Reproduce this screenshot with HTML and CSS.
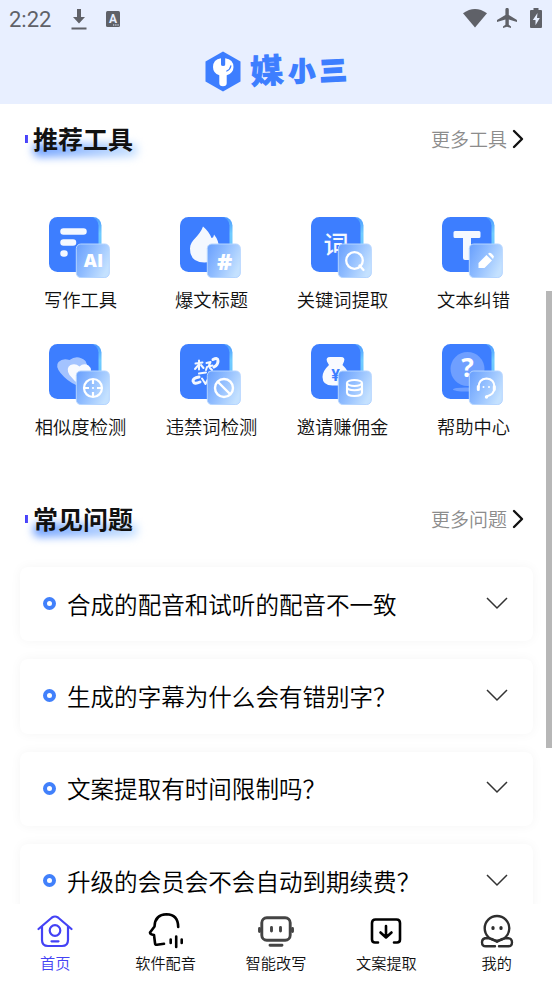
FILE: index.html
```html
<!DOCTYPE html>
<html lang="zh-CN">
<head>
<meta charset="utf-8">
<title>媒小三</title>
<link rel="stylesheet" href="styles.css">
</head>
<body>
<svg class="defs" width="0" height="0" aria-hidden="true">
  <defs>
    <linearGradient id="strip" x1="0" y1="0" x2="0" y2="1">
      <stop offset="0" stop-color="#4a98ff"/><stop offset=".3" stop-color="#70ccff"/><stop offset="1" stop-color="#62b8ff"/>
    </linearGradient>
    <linearGradient id="glass" x1="0" y1="0.1" x2="1" y2=".6">
      <stop offset="0" stop-color="#6ba1fd"/><stop offset=".45" stop-color="#8fbcff"/><stop offset="1" stop-color="#c4e1ff"/>
    </linearGradient>
    <g id="tile">
      <rect x="8" y="0" width="44.500" height="55" rx="8.500" fill="url(#strip)"/>
      <rect x="0" y="0" width="49.500" height="55" rx="8.500" fill="#3d7eff"/>
    </g>
    <g id="badge">
      <rect x="27.300" y="27" width="33" height="33.500" rx="4.500" fill="url(#glass)" stroke="#b5d5ff" stroke-width="1"/>
    </g>
  </defs>
</svg>
<div class="app">
  <header class="header">
    <div class="status">
      <span class="clock">2:22</span>
      <svg class="st-down" width="16" height="21" viewBox="0 0 16 21"><path d="M6 0h4v8h4l-6 6.500L2 8h4zM.5 18.500h15v2H.5z"/></svg>
      <svg class="st-a" width="14" height="16" viewBox="0 0 14 16"><rect width="14" height="16" rx="1.500"/><text x="7" y="11.500">A</text><path d="M7 13.500h1.300v1H7zm2.200 0h1.300v1H9.200zm2.200 0h1.300v1h-1.300z" fill="#e8efff"/></svg>
      <svg class="st-wifi" width="24" height="19" viewBox="0 0 24 19"><path d="M0 4.300Q12-4.300 24 4.300L12 18.500z"/></svg>
      <svg class="st-plane" width="20" height="21" viewBox="0 0 20 21"><path d="M20 14v-2l-8.200-5V1.600a1.700 1.700 0 0 0-3.400 0V7L0 12v2l8.400-2.600v5.300L6 18.500V20l4-1.200 4 1.200v-1.500l-2.200-1.800v-5.300z"/></svg>
      <svg class="st-batt" width="12" height="20" viewBox="0 0 12 20"><path d="M3.500 0h5v2H11q1 0 1 1v16q0 1-1 1H1q-1 0-1-1V3q0-1 1-1h2.500z"/><path d="M7.500 5L2.800 12h2.700v5.300L9.800 10H7z" fill="#e8efff"/></svg>
    </div>
    <div class="brand">
      <svg width="36" height="41" viewBox="0 0 36 41">
        <path d="M18 .5L35.500 10.500v20L18 40.500.5 30.500v-20z" fill="#3d7eff"/>
        <path d="M16 7.200Q8 8.500 8 16q0 6 6.300 8.300V32q0 3.300 3.700 3.300t3.700-3.300v-7.700Q28.500 22 28.500 16q0-7.500-8.300-8.800v6.300q0 1.500-2.100 1.500T16 13.500z" fill="#fff"/>
        <path d="M25.800 15q-.5 3.500-4 5" fill="none" stroke="#3d7eff" stroke-width="1.300" stroke-linecap="round"/>
      </svg>
      <h1 class="wordmark"><span class="w1">媒</span><span class="w2">小</span><span class="w3">三</span></h1>
    </div>
  </header>

  <main class="content">
    <div class="section-head">
      <h2>推荐工具</h2>
      <a class="more"><span>更多工具</span><svg width="12" height="20" viewBox="0 0 12 20"><path d="M2 2l8 8-8 8"/></svg></a>
    </div>
    <div class="tools">
      <div class="tool">
        <svg class="ticon" viewBox="0 0 62 62"><use href="#tile"/>
          <path d="M14.500 14.500h20M14.500 25.500h9.500M14.500 36.500h1" stroke="#f4f8ff" stroke-width="6.500" stroke-linecap="round"/>
          <use href="#badge"/><text class="g-ai" x="44.500" y="50">AI</text></svg>
        <span>写作工具</span>
      </div>
      <div class="tool">
        <svg class="ticon" viewBox="0 0 62 62"><use href="#tile"/>
          <path d="M23 9.500q6 5 8.500 11.500 2 0 2.500-3.500 5 6 5 14 0 14-14.500 14T10 31.500C10 23 20 19 23 9.500z" fill="#f4f8ff"/>
          <use href="#badge"/><text class="g-hash" x="44.500" y="52.500">#</text></svg>
        <span>爆文标题</span>
      </div>
      <div class="tool">
        <svg class="ticon" viewBox="0 0 62 62"><use href="#tile"/>
          <text class="g-word" x="25" y="37">词</text>
          <use href="#badge"/><circle cx="43.500" cy="43.500" r="8.300" fill="none" stroke="#fff" stroke-width="2.300"/><path d="M48.500 48.500l4 4.500" stroke="#fff" stroke-width="2.300" stroke-linecap="round"/></svg>
        <span>关键词提取</span>
      </div>
      <div class="tool">
        <svg class="ticon" viewBox="0 0 62 62"><use href="#tile"/>
          <path d="M13 14h24q1.500 0 1.500 1.500v4q0 1.500-1.500 1.500h-8v20q0 2-2 2h-4q-2 0-2-2V21h-8q-1.500 0-1.500-1.500v-4q0-1.500 1.500-1.500z" fill="#f4f8ff"/>
          <use href="#badge"/><path d="M36.500 51v-5l8-8 5.500 5.500-7.500 7.500zM46 36.800l1.500-1q1.500-.5 4.500 3.700l-1 2.500z" fill="#fff"/></svg>
        <span>文本纠错</span>
      </div>
      <div class="tool">
        <svg class="ticon" viewBox="0 0 62 62"><use href="#tile"/>
          <path d="M27 41Q18 37 11.500 29 6 22 9.500 18q4-4 11-2 8-6 16 1 4 7 0 16z" fill="#a3c3ff"/>
          <path d="M32 42Q25 37 20.500 31q-4-7 1-10 5-2 9 1.500 4-4 9-1 5 4 0 11z" fill="#f8faff"/>
          <use href="#badge"/><g fill="none" stroke="#fff" stroke-width="2.200"><circle cx="44" cy="44" r="9"/><path d="M44 35v5m0 8v5M35 44h5m8 0h5"/></g><circle cx="44" cy="44" r="1.100" fill="#fff"/></svg>
        <span>相似度检测</span>
      </div>
      <div class="tool">
        <svg class="ticon" viewBox="0 0 62 62"><use href="#tile"/>
          <g fill="none" stroke="#f4f8ff" stroke-width="2" stroke-linecap="round" stroke-linejoin="round"><path d="M15.500 19.500l7-1M19 16.500v9M18.500 21l-3.500 4M21 21l2.500 3M26.500 19l4-1-2 4.500 4-1M27 23l-1 3M30 24l2 2"/><path d="M33 15.500q5-2.500 5 1.500 0 4-4 6" stroke-width="3"/><path d="M19 29.500l7-1M29 28.500h6"/><path d="M19 33q-6 1-6 4 1 4 7 1" stroke-width="3"/><path d="M22 34.500l3.500 5.500 2-4"/></g>
          <use href="#badge"/><g fill="none" stroke="#fff" stroke-width="2.400"><circle cx="44" cy="44" r="9"/><path d="M37.500 37.500l13 13"/></g></svg>
        <span>违禁词检测</span>
      </div>
      <div class="tool">
        <svg class="ticon" viewBox="0 0 62 62"><use href="#tile"/>
          <path d="M16 17.500Q14.500 13 19 13h11q4.500 0 3 4.500L31.500 21q6.500 6 6.500 12 0 8.500-10 8.500h-6.500q-10 0-10-8.500 0-6 6.500-12z" fill="#f8faff"/>
          <text class="g-yen" x="24.500" y="37">¥</text>
          <use href="#badge"/><g fill="none" stroke="#fff" stroke-width="2.100"><ellipse cx="43.500" cy="39" rx="7.500" ry="3"/><path d="M36 39v9.500q0 3.500 7.500 3.500t7.500-3.500V39M36 43q0 3.200 7.500 3.200t7.500-3.200"/></g></svg>
        <span>邀请赚佣金</span>
      </div>
      <div class="tool">
        <svg class="ticon" viewBox="0 0 62 62"><use href="#tile"/>
          <circle cx="25.500" cy="25" r="17" fill="#6f9fff"/><ellipse cx="24" cy="45.500" rx="13" ry="2" fill="#6f9fff"/>
          <text class="g-help" x="25.500" y="33">?</text>
          <use href="#badge"/><g fill="none" stroke="#fff" stroke-width="2" stroke-linecap="round"><path d="M36.500 43.500q0-8.500 8-9 8 .5 8 9 0 7-8 9"/><path d="M36.300 42.500v3M52.300 42.500v3" stroke-width="3"/></g><g fill="#fff"><circle cx="41.500" cy="43" r="1"/><circle cx="47" cy="43" r="1"/><circle cx="44.500" cy="53" r="1.700"/></g></svg>
        <span>帮助中心</span>
      </div>
    </div>

    <div class="section-head second">
      <h2>常见问题</h2>
      <a class="more"><span>更多问题</span><svg width="12" height="20" viewBox="0 0 12 20"><path d="M2 2l8 8-8 8"/></svg></a>
    </div>
    <div class="faq">
      <div class="q"><i></i><span>合成的配音和试听的配音不一致</span><svg width="22" height="13" viewBox="0 0 22 13"><path d="M1 1l10 10L21 1"/></svg></div>
      <div class="q"><i></i><span>生成的字幕为什么会有错别字？</span><svg width="22" height="13" viewBox="0 0 22 13"><path d="M1 1l10 10L21 1"/></svg></div>
      <div class="q"><i></i><span>文案提取有时间限制吗？</span><svg width="22" height="13" viewBox="0 0 22 13"><path d="M1 1l10 10L21 1"/></svg></div>
      <div class="q"><i></i><span>升级的会员会不会自动到期续费？</span><svg width="22" height="13" viewBox="0 0 22 13"><path d="M1 1l10 10L21 1"/></svg></div>
    </div>
  </main>

  <nav class="tabs">
    <a class="tab active">
      <svg width="36" height="36" viewBox="0 0 36 36"><path d="M1.500 16L15 4.500q3-2 6 0L34.500 16M5 13.500V27q0 6 6 6h14q6 0 6-6V13.500M14.500 28.300h7"/><circle cx="18" cy="17.500" r="5.300"/></svg>
      <span>首页</span>
    </a>
    <a class="tab dark">
      <svg width="36" height="36" viewBox="0 0 36 36"><path d="M30.200 14Q30 1.500 18.500 1.300 7 1.500 6.500 13.500L2 19.500q0 2 4 2.500l1 8q0 2 2 1.700l7-.9M22.700 26.500V30M28.200 23.500V34M33.700 26.500V30"/></svg>
      <span>软件配音</span>
    </a>
    <a class="tab grey">
      <svg width="36" height="36" viewBox="0 0 36 36"><rect x="3.800" y="4.800" width="28.400" height="22.500" rx="5"/><path d="M13.500 14.500v3.500M22.500 14.500v3.500M1.500 15.500v3M34.500 15.500v3M12 32.300h12"/></svg>
      <span>智能改写</span>
    </a>
    <a class="tab dark">
      <svg width="36" height="36" viewBox="0 0 36 36"><path d="M10 29.500H7q-3 0-3-3V10q0-3.500 3.500-3.500h21Q32 6.500 32 10v16.500q0 3-3 3h-3M18 13v11M12.500 19.500L18 24.500l5.500-5"/></svg>
      <span>文案提取</span>
    </a>
    <a class="tab mine">
      <svg width="36" height="36" viewBox="0 0 36 36"><circle cx="18" cy="15.300" r="12.300"/><path d="M8.500 25q-5.500 0-5.500 4.200t4 4.100H16M27.500 25q5.500 0 5.500 4.200t-4 4.100h-9M8.500 25q5 .3 9.500 3.700 4.500-3.400 9.500-3.700"/><path d="M14 14.500v1M22 14.500v1" stroke-width="3.200"/></svg>
      <span>我的</span>
    </a>
  </nav>
  <div class="scrollbar"></div>
</div>
</body>
</html>
```
FILE: styles.css
```css
* { box-sizing: border-box; }
body { margin: 0; font-family: "Noto Sans CJK SC", sans-serif; font-weight: 350; color: #111; background: #fff; overflow: hidden; }
.defs { position: absolute; }
.app { position: relative; display: flex; flex-direction: column; width: 552px; height: 981px; overflow: hidden; }
h1, h2 { margin: 0; }

.header { flex: none; height: 104px; background: #e8efff; }
.status { display: flex; align-items: center; height: 38px; padding: 0 10px 0 9px; fill: #5f6168; }
.clock { font: 22px/38px Roboto, sans-serif; color: #5f6168; width: 43px; padding-top: 1px; }
.st-down { margin-left: 19px; }
.st-a { margin-left: 19px; margin-bottom: 1px; }
.st-a text { font: bold 12px Roboto, sans-serif; fill: #e8efff; text-anchor: middle; }
.st-wifi { margin-left: auto; margin-bottom: 2px; }
.st-plane { margin-left: 10px; margin-bottom: 1px; }
.st-batt { margin-left: 13px; margin-bottom: 2px; }
.brand { display: flex; align-items: center; margin-left: 205px; height: 66px; }
.wordmark { display: flex; align-items: center; height: 41px; margin-left: 9px; color: #3d7eff; font-weight: 700; line-height: 1; -webkit-text-stroke: 1px #3d7eff; }
.w1 { font-size: 33px; transform: rotate(-4deg); margin-top: -3px; }
.w2 { font-size: 26px; margin-left: 6px; margin-top: -3px; -webkit-text-stroke-width: 2px; }
.w3 { font-size: 26px; margin-left: 5px; margin-top: -4px; -webkit-text-stroke-width: 2.5px; transform: rotate(-3deg); }

.content { flex: 1; min-height: 0; overflow: hidden; background: #fff; }
.section-head { display: flex; align-items: center; justify-content: space-between; height: 72px; padding: 0 28px 0 25px; }
.section-head h2 { display: flex; align-items: center; font-size: 25px; line-height: 36px; font-weight: 700; position: relative; z-index: 0; margin-top: -4px; }
.section-head h2::before { content: ""; width: 3px; height: 8px; margin: 1px 5px 0 0; background: linear-gradient(90deg, #3d3dff, #5a50f5); }
.section-head h2::after { content: ""; position: absolute; z-index: -1; left: 8px; right: -5px; top: 23px; height: 14px; border-radius: 6px; background: linear-gradient(90deg, #6d9fff, #cce4ff); filter: blur(4.5px); }
.more { display: flex; align-items: center; gap: 5px; font-size: 19px; color: #8c8c8c; margin-top: -2px; }
.more span { margin-top: -1px; }
.more svg { fill: none; stroke: #111; stroke-width: 2.4; stroke-linecap: round; stroke-linejoin: round; }
.tools { display: grid; grid-template-columns: repeat(4, 131px); grid-auto-rows: 127px; margin-left: 15px; padding-top: 41px; height: 308px; }
.tool { display: flex; flex-direction: column; align-items: center; font-size: 18.3px; line-height: 26px; white-space: nowrap; }
.ticon { width: 62px; height: 62px; margin-bottom: 8px; margin-right: 1px; }
.tool span { margin-top: -1px; }
.ticon text { text-anchor: middle; fill: #fff; }
.ticon .g-ai { font: 800 18px "Open Sans", sans-serif; }
.ticon .g-hash { font: 900 23px "Open Sans", sans-serif; }
.ticon .g-word { font: 500 25px "Noto Sans CJK SC", sans-serif; fill: #f4f8ff; }
.ticon .g-yen { font: bold 16px Roboto, sans-serif; fill: #3d7eff; }
.ticon .g-help { font: bold 26px "Noto Sans", sans-serif; }

.faq { display: flex; flex-direction: column; gap: 18px; padding: 11px 19px 0 20px; }
.q { flex: none; display: flex; align-items: center; height: 74.300px; padding: 0 25px 0 23px; border-radius: 8px; background: #fff; box-shadow: 0 0 12px rgba(0, 0, 0, .045); font-size: 23.550px; color: #000; }
.q i { width: 13px; height: 13px; border: 4px solid #4180fb; border-radius: 50%; margin-right: 11px; margin-bottom: 1px; }
.q span { flex: 1; white-space: nowrap; margin-top: -1px; }
.q svg { fill: none; stroke: #333; stroke-width: 1.500; margin-bottom: 2px; }

.tabs { flex: none; display: grid; grid-template-columns: repeat(5, 1fr); height: 77px; background: #fff; padding-top: 9px; }
.tab { display: flex; flex-direction: column; align-items: center; font-size: 15.200px; line-height: 22px; color: #111; }
.tab svg { fill: none; stroke: currentColor; stroke-width: 2.200; stroke-linecap: round; stroke-linejoin: round; margin-bottom: 2px; }
.tab.active { color: #4442f5; }
.dark svg { stroke: #000; stroke-width: 2.600; }
.grey svg { stroke: #444; stroke-width: 2.900; }
.mine svg { stroke: #2e2e2e; stroke-width: 2.400; }
.scrollbar { position: absolute; right: 0; top: 291px; width: 6px; height: 457px; background: #b7b7b7; }
```
